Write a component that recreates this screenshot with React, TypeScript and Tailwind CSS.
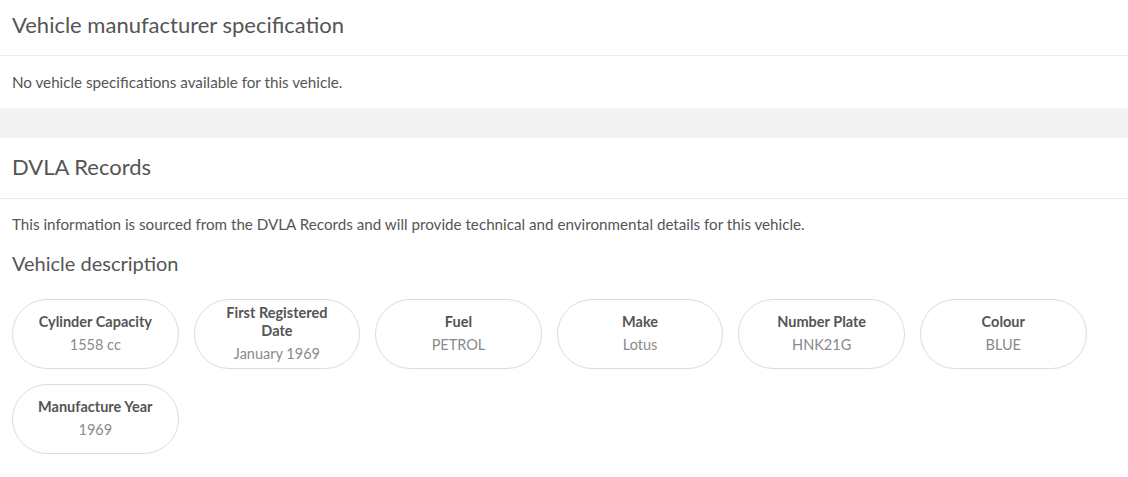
const specs = [
  { label: "Cylinder Capacity", value: "1558 cc" },
  { label: "First Registered Date", value: "January 1969" },
  { label: "Fuel", value: "PETROL" },
  { label: "Make", value: "Lotus" },
  { label: "Number Plate", value: "HNK21G" },
  { label: "Colour", value: "BLUE" },
  { label: "Manufacture Year", value: "1969" },
];

const App = () => {
  return (
    <div className="min-h-screen bg-white text-[#555]" style={{ fontFamily: "Lato, 'Noto Sans', sans-serif" }}>
      {/* Manufacturer spec */}
      <section>
        <h2 className="h-[56px] border-b border-[#ececec] px-3 pt-[12px] text-[22px] leading-[26px] text-[#555]">
          Vehicle manufacturer specification
        </h2>
        <p className="h-[52px] px-3 pt-[16px] text-[15.2px] leading-[20px]">
          No vehicle specifications available for this vehicle.
        </p>
      </section>

      <div className="h-[30px] bg-[#f3f3f3]" />

      {/* DVLA */}
      <section>
        <h2 className="h-[61px] border-b border-[#ececec] px-3 pt-[16px] text-[22px] leading-[26px] text-[#555]">
          DVLA Records
        </h2>
        <p className="px-3 pt-[15px] text-[15.2px] leading-[20px]">
          This information is sourced from the DVLA Records and will provide technical and environmental details for this vehicle.
        </p>
        <h3 className="px-3 pt-[16px] text-[20px] leading-[26px] text-[#555]">Vehicle description</h3>
        <div className="flex flex-wrap gap-x-[15px] gap-y-[15px] px-3 pt-[23px]">
          {specs.map((s) => (
            <div
              key={s.label}
              className="flex h-[70px] w-[166.6px] flex-col items-center justify-center rounded-full border border-[#dcdcdc] px-5 text-center"
            >
              <div className="text-[14.5px] font-bold leading-[18px] text-[#555]">{s.label}</div>
              <div className="mt-[4px] text-[14.5px] leading-[20px] text-[#8a8a8a]">{s.value}</div>
            </div>
          ))}
        </div>
      </section>
    </div>
  );
};

export default App;
